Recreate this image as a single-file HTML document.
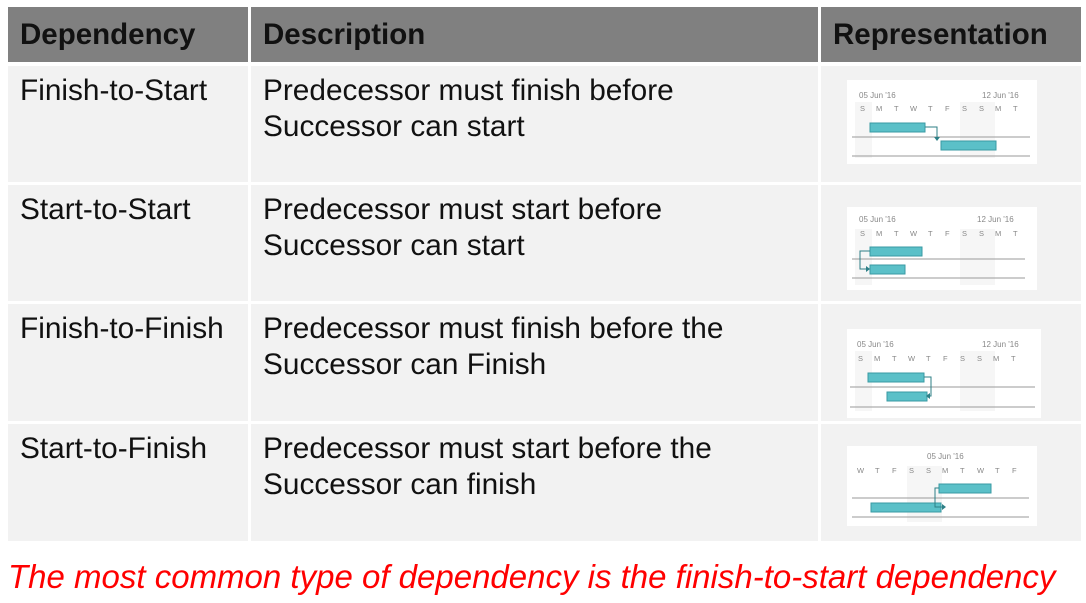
<!DOCTYPE html><html><head><style>
body{margin:0;width:1086px;height:603px;background:#fff;position:relative;overflow:hidden;font-family:"Liberation Sans",Arial,sans-serif}
.c{position:absolute;background:#f2f2f2;font-size:29.8px;color:#111;line-height:36px;box-sizing:border-box;padding:7px 0 0 12px;white-space:nowrap}
.h{background:#808080;font-weight:bold;color:#111;padding:10px 0 0 12px;font-size:29.5px}
svg{position:absolute}
.red{position:absolute;left:8px;top:558px;color:#f00;font-style:italic;font-size:33px;white-space:nowrap}
</style></head><body>
<div class="c h" style="left:8px;top:7px;width:240px;height:55px">Dependency</div>
<div class="c h" style="left:251px;top:7px;width:567px;height:55px">Description</div>
<div class="c h" style="left:821px;top:7px;width:260px;height:55px">Representation</div>

<div class="c" style="left:8px;top:66px;width:240px;height:116px">Finish-to-Start</div>
<div class="c" style="left:251px;top:66px;width:567px;height:116px">Predecessor must finish before<br>Successor can start</div>
<div class="c" style="left:821px;top:66px;width:260px;height:116px"></div>

<div class="c" style="left:8px;top:185px;width:240px;height:116px">Start-to-Start</div>
<div class="c" style="left:251px;top:185px;width:567px;height:116px">Predecessor must start before<br>Successor can start</div>
<div class="c" style="left:821px;top:185px;width:260px;height:116px"></div>

<div class="c" style="left:8px;top:304px;width:240px;height:117px">Finish-to-Finish</div>
<div class="c" style="left:251px;top:304px;width:567px;height:117px">Predecessor must finish before the<br>Successor can Finish</div>
<div class="c" style="left:821px;top:304px;width:260px;height:117px"></div>

<div class="c" style="left:8px;top:424px;width:240px;height:117px">Start-to-Finish</div>
<div class="c" style="left:251px;top:424px;width:567px;height:117px">Predecessor must start before the<br>Successor can finish</div>
<div class="c" style="left:821px;top:424px;width:260px;height:117px"></div>

<!-- gantt 1 -->
<svg style="left:847px;top:80px" width="190" height="84" viewBox="0 0 190 84" font-family="Liberation Sans" font-size="8" fill="#888">
<rect width="190" height="84" fill="#fff"/><rect x="8" y="22" width="17" height="56" fill="#f6f6f6"/><rect x="113" y="22" width="35" height="56" fill="#f6f6f6"/>
<text x="12" y="18">05 Jun '16</text><text x="135" y="18">12 Jun '16</text>
<g font-size="7.5"><text x="13" y="31">S</text><text x="29" y="31">M</text><text x="47" y="31">T</text><text x="63" y="31">W</text><text x="81" y="31">T</text><text x="98" y="31">F</text><text x="115" y="31">S</text><text x="132" y="31">S</text><text x="148" y="31">M</text><text x="166" y="31">T</text></g>
<line x1="5" y1="57" x2="183" y2="57" stroke="#999"/><line x1="5" y1="76" x2="183" y2="76" stroke="#999"/>
<rect x="23" y="43" width="55" height="9" fill="#5bc0c8" stroke="#3a9aa3"/><rect x="94" y="61" width="55" height="9" fill="#5bc0c8" stroke="#3a9aa3"/>
<path d="M78 47 H90 V58" fill="none" stroke="#2d7f86"/><path d="M87 57 L93 57 L90 61Z" fill="#2d7f86"/>
</svg>
<!-- gantt 2 -->
<svg style="left:847px;top:207px" width="190" height="83" viewBox="0 0 190 83" font-family="Liberation Sans" font-size="8" fill="#888">
<rect width="190" height="83" fill="#fff"/><rect x="8" y="22" width="17" height="56" fill="#f6f6f6"/><rect x="113" y="22" width="35" height="56" fill="#f6f6f6"/>
<text x="12" y="15">05 Jun '16</text><text x="130" y="15">12 Jun '16</text>
<g font-size="7.5"><text x="13" y="29">S</text><text x="29" y="29">M</text><text x="47" y="29">T</text><text x="63" y="29">W</text><text x="81" y="29">T</text><text x="98" y="29">F</text><text x="115" y="29">S</text><text x="132" y="29">S</text><text x="148" y="29">M</text><text x="166" y="29">T</text></g>
<line x1="5" y1="52" x2="178" y2="52" stroke="#999"/><line x1="5" y1="71" x2="178" y2="71" stroke="#999"/>
<rect x="23" y="40" width="52" height="9" fill="#5bc0c8" stroke="#3a9aa3"/><rect x="23" y="58" width="35" height="9" fill="#5bc0c8" stroke="#3a9aa3"/>
<path d="M23 44 H13 V62 H20" fill="none" stroke="#2d7f86"/><path d="M19 59 L23 62 L19 65Z" fill="#2d7f86"/>
</svg>
<!-- gantt 3 -->
<svg style="left:847px;top:329px" width="194" height="89" viewBox="0 0 194 89" font-family="Liberation Sans" font-size="8" fill="#888">
<rect width="194" height="89" fill="#fff"/><rect x="8" y="22" width="17" height="60" fill="#f6f6f6"/><rect x="113" y="22" width="35" height="60" fill="#f6f6f6"/>
<text x="10" y="18">05 Jun '16</text><text x="135" y="18">12 Jun '16</text>
<g font-size="7.5"><text x="11" y="32">S</text><text x="27" y="32">M</text><text x="45" y="32">T</text><text x="61" y="32">W</text><text x="79" y="32">T</text><text x="96" y="32">F</text><text x="113" y="32">S</text><text x="130" y="32">S</text><text x="146" y="32">M</text><text x="164" y="32">T</text></g>
<line x1="3" y1="58" x2="188" y2="58" stroke="#999"/><line x1="3" y1="78" x2="188" y2="78" stroke="#999"/>
<rect x="21" y="44" width="56" height="9" fill="#5bc0c8" stroke="#3a9aa3"/><rect x="40" y="63" width="40" height="9" fill="#5bc0c8" stroke="#3a9aa3"/>
<path d="M77 48 H84 V67 H82" fill="none" stroke="#2d7f86"/><path d="M83 64 L79 67 L83 70Z" fill="#2d7f86"/>
</svg>
<!-- gantt 4 -->
<svg style="left:847px;top:446px" width="190" height="80" viewBox="0 0 190 80" font-family="Liberation Sans" font-size="8" fill="#888">
<rect width="190" height="80" fill="#fff"/><rect x="60" y="20" width="35" height="56" fill="#f6f6f6"/>
<text x="80" y="13">05 Jun '16</text>
<g font-size="7.5"><text x="10" y="27">W</text><text x="28" y="27">T</text><text x="45" y="27">F</text><text x="62" y="27">S</text><text x="79" y="27">S</text><text x="95" y="27">M</text><text x="113" y="27">T</text><text x="130" y="27">W</text><text x="148" y="27">T</text><text x="165" y="27">F</text></g>
<line x1="5" y1="52" x2="182" y2="52" stroke="#999"/><line x1="5" y1="71" x2="182" y2="71" stroke="#999"/>
<rect x="92" y="38" width="52" height="9" fill="#5bc0c8" stroke="#3a9aa3"/><rect x="24" y="57" width="70" height="9" fill="#5bc0c8" stroke="#3a9aa3"/>
<path d="M92 42 H88 V61 H96" fill="none" stroke="#2d7f86"/><path d="M95 58 L99 61 L95 64Z" fill="#2d7f86"/>
</svg>

<div class="red">The most common type of dependency is the finish-to-start dependency</div>
</body></html>
